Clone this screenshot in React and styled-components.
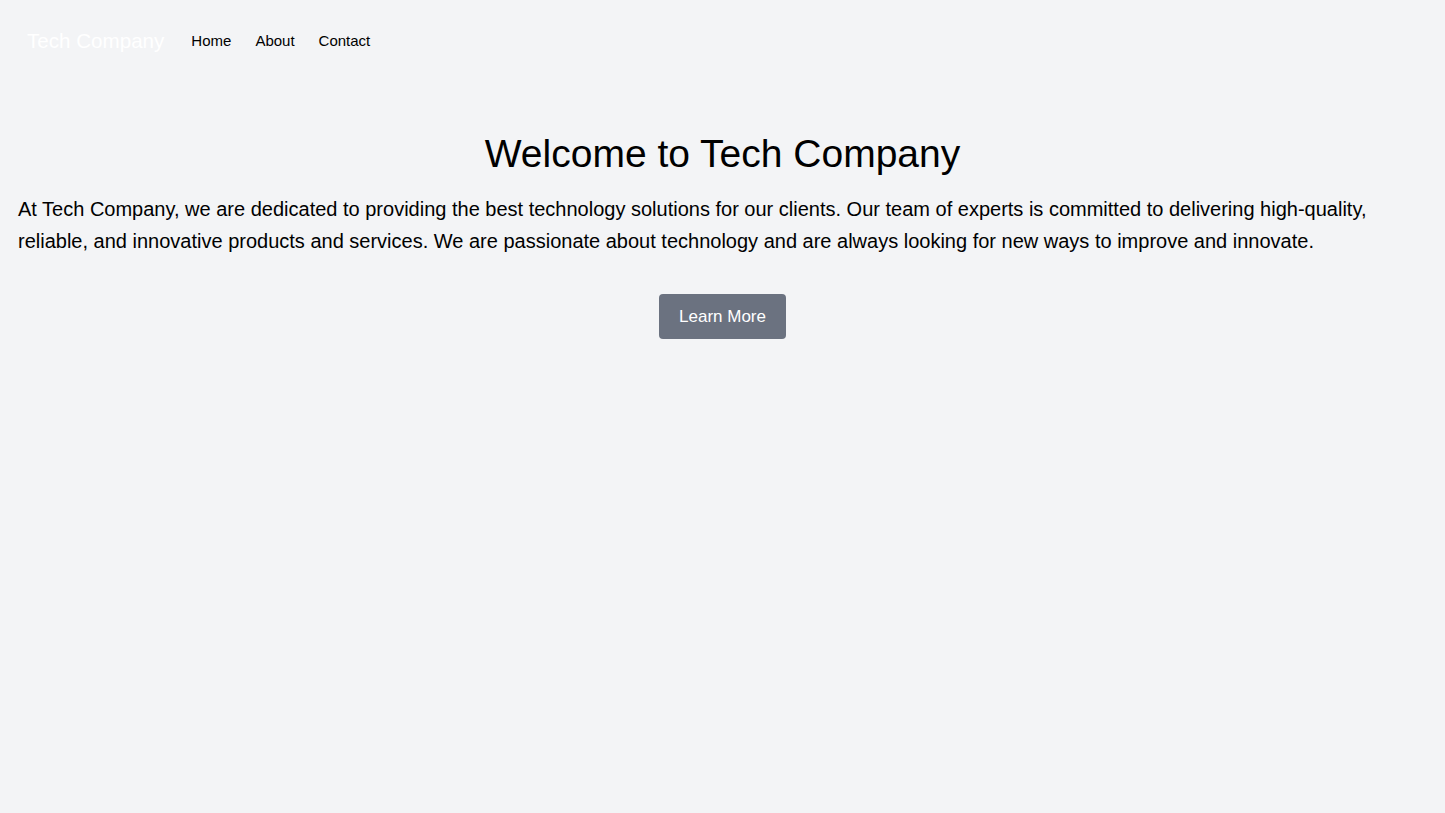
import React from 'react';
import styled, { createGlobalStyle } from 'styled-components';

const GlobalStyle = createGlobalStyle`
    html, body {
        margin: 0;
        padding: 0;
        background: #f3f4f6;
        font-family: "Liberation Sans", Arial, sans-serif;
        color: #000;
    }
    body {
        min-height: 813px;
    }
`;

const Nav = styled.nav`
    display: flex;
    align-items: center;
    height: 82px;
    padding: 0 27px;
`;

const Brand = styled.a`
    color: #fff;
    font-size: 20.6px;
    text-decoration: none;
    margin-right: 27px;
`;

const NavLinks = styled.ul`
    display: flex;
    gap: 24px;
    margin: 0;
    padding: 0;
    list-style: none;

    a {
        color: #000;
        font-size: 15px;
        text-decoration: none;
    }
`;

const Hero = styled.main`
    display: flex;
    flex-direction: column;
    align-items: center;
    padding: 46px 18px 0;

    h1 {
        font-size: 39px;
        font-weight: 400;
        line-height: 52px;
        margin: 0 0 13px;
    }

    p {
        align-self: stretch;
        font-size: 20px;
        line-height: 32px;
        margin: 0 0 37px;
    }
`;

const Button = styled.a`
    display: inline-flex;
    align-items: center;
    justify-content: center;
    width: 127px;
    height: 45px;
    box-sizing: border-box;
    background: #6b7280;
    color: #fff;
    font-size: 17px;
    border-radius: 4px;
    text-decoration: none;
`;

function App() {
    const links = ['Home', 'About', 'Contact'];
    return (
        <>
            <GlobalStyle />
            <Nav>
                <Brand href="#">Tech Company</Brand>
                <NavLinks>
                    {links.map(l => (
                        <li key={l}><a href="#">{l}</a></li>
                    ))}
                </NavLinks>
            </Nav>
            <Hero>
                <h1>Welcome to Tech Company</h1>
                <p>
                    At Tech Company, we are dedicated to providing the best technology solutions for our clients. Our team of experts is committed to delivering high-quality, reliable, and innovative products and services. We are passionate about technology and are always looking for new ways to improve and innovate.
                </p>
                <Button href="#">Learn More</Button>
            </Hero>
        </>
    );
}

export default App;
